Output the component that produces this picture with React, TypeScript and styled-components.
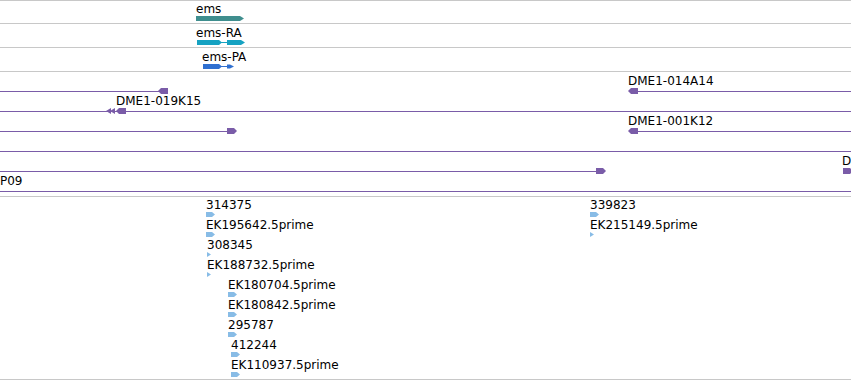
import React from "react";
import styled, { createGlobalStyle } from "styled-components";

const GlobalStyle = createGlobalStyle`
  html, body {
    margin: 0;
    padding: 0;
    background: #fff;
  }
  body {
    font-family: "DejaVu Sans", Verdana, sans-serif;
  }
`;

const PURPLE = "#7a5ca8";
const RULE = "#c8c8c8";

const View = styled.div`
  width: 851px;
  height: 380px;
  overflow: hidden;
  display: flex;
  flex-direction: column;
  border-top: 1px solid ${RULE};
  box-sizing: border-box;
`;

const GeneRow = styled.div<{ $h: number }>`
  position: relative;
  flex: none;
  height: ${(p) => p.$h}px;
  border-bottom: 1px solid ${RULE};
`;

const GeneFeature = styled.div<{ $top: number }>`
  position: absolute;
  top: ${(p) => p.$top}px;
  display: flex;
  flex-direction: column;
`;

const Label = styled.div`
  font-family: "DejaVu Sans", Verdana, sans-serif;
  font-size: 12px;
  line-height: 14px;
  color: #000;
  white-space: nowrap;
`;

const Glyph = styled.svg`
  display: block;
  overflow: visible;
`;

const Track = styled.div<{ $h: number }>`
  position: relative;
  flex: none;
  height: ${(p) => p.$h}px;
  border-bottom: 1px solid ${RULE};
`;

const Lane = styled.div`
  position: relative;
  height: 20px;
`;

const Spot = styled.div<{ $top: number }>`
  position: absolute;
  top: ${(p) => p.$top}px;
`;

const Stroke = styled.div`
  position: absolute;
  top: 19px;
  height: 1px;
  background: ${PURPLE};
`;

type Seg = [number, number];
type Mark = { x: number; kind: "l" | "r" | "dbl" };
type Bac = { segs: Seg[]; marks: Mark[]; labels: { x: number; text: string }[] };

const bacRows: Bac[] = [
  {
    segs: [[0, 160], [630, 851]],
    marks: [{ x: 158, kind: "l" }, { x: 628, kind: "l" }],
    labels: [{ x: 628, text: "DME1-014A14" }],
  },
  {
    segs: [[0, 851]],
    marks: [{ x: 106, kind: "dbl" }, { x: 116, kind: "l" }],
    labels: [{ x: 116, text: "DME1-019K15" }],
  },
  {
    segs: [[0, 230], [630, 851]],
    marks: [{ x: 227, kind: "r" }, { x: 628, kind: "l" }],
    labels: [{ x: 628, text: "DME1-001K12" }],
  },
  { segs: [[0, 851]], marks: [], labels: [] },
  {
    segs: [[0, 600]],
    marks: [{ x: 596, kind: "r" }, { x: 843, kind: "r" }],
    labels: [{ x: 842, text: "D" }],
  },
  { segs: [[0, 851]], marks: [], labels: [{ x: 0, text: "P09" }] },
];

type Est = { x: number; text: string; small?: boolean };
const estRows: Est[][] = [
  [{ x: 206, text: "314375" }, { x: 590, text: "339823" }],
  [{ x: 206, text: "EK195642.5prime" }, { x: 590, text: "EK215149.5prime", small: true }],
  [{ x: 207, text: "308345", small: true }],
  [{ x: 207, text: "EK188732.5prime", small: true }],
  [{ x: 228, text: "EK180704.5prime" }],
  [{ x: 228, text: "EK180842.5prime" }],
  [{ x: 228, text: "295787" }],
  [{ x: 231, text: "412244" }],
  [{ x: 231, text: "EK110937.5prime" }],
];

function BacMark({ kind }: { kind: Mark["kind"] }) {
  if (kind === "dbl") {
    return (
      <Glyph width={10} height={6}>
        <polygon points="0,3 5,0 5,6" fill={PURPLE} />
        <polygon points="4,3 9,0 9,6" fill={PURPLE} />
      </Glyph>
    );
  }
  const pts = kind === "r" ? "0,0 7,0 10,3 7,6 0,6" : "3,0 10,0 10,6 3,6 0,3";
  return (
    <Glyph width={10} height={6}>
      <polygon points={pts} fill={PURPLE} />
    </Glyph>
  );
}

function EstMark({ small }: { small?: boolean }) {
  return small ? (
    <Glyph width={4} height={5}>
      <polygon points="0,0 4,2.5 0,5" fill="#88bce6" />
    </Glyph>
  ) : (
    <Glyph width={9} height={5}>
      <polygon points="0,0 6,0 9,2.5 6,5 0,5" fill="#88bce6" />
    </Glyph>
  );
}

export default function App() {
  return (
    <>
      <GlobalStyle />
      <View>
        <GeneRow $h={22}>
          <GeneFeature $top={1} style={{ left: 196 }}>
            <Label>ems</Label>
            <Glyph width={48} height={5}>
              <polygon points="0,0 44,0 48,2.5 44,5 0,5" fill="#3f8e8e" />
            </Glyph>
          </GeneFeature>
        </GeneRow>
        <GeneRow $h={23}>
          <GeneFeature $top={2} style={{ left: 196 }}>
            <Label>ems-RA</Label>
            <Glyph width={49} height={5}>
              <polygon points="1,0 23,0 26,2.5 23,5 1,5" fill="#16a2c2" />
              <rect x={25} y={2} width={7} height={1} fill="#16a2c2" />
              <polygon points="31,0 45,0 49,2.5 45,5 31,5" fill="#16a2c2" />
            </Glyph>
          </GeneFeature>
        </GeneRow>
        <GeneRow $h={23}>
          <GeneFeature $top={2} style={{ left: 202 }}>
            <Label>ems-PA</Label>
            <Glyph width={33} height={5}>
              <polygon points="1,0 17,0 20,2.5 17,5 1,5" fill="#3070d0" />
              <rect x={19} y={2} width={7} height={1} fill="#3070d0" />
              <polygon points="25,0.5 28,0.5 32,2.5 28,4.5 25,4.5" fill="#3070d0" />
            </Glyph>
          </GeneFeature>
        </GeneRow>

        <Track $h={124}>
          {bacRows.map((row, i) => (
            <Lane key={i}>
              {row.segs.map(([a, b], j) => (
                <Stroke key={j} style={{ left: a, width: b - a }} />
              ))}
              {row.marks.map((m, j) => (
                <Spot key={j} $top={16} style={{ left: m.x }}>
                  <BacMark kind={m.kind} />
                </Spot>
              ))}
              {row.labels.map((l, j) => (
                <Spot key={j} $top={2} style={{ left: l.x }}>
                  <Label>{l.text}</Label>
                </Spot>
              ))}
            </Lane>
          ))}
        </Track>

        <Track $h={182}>
          {estRows.map((row, i) => (
            <Lane key={i}>
              {row.map((e, j) => (
                <Spot key={j} $top={1} style={{ left: e.x }}>
                  <Label>{e.text}</Label>
                  <EstMark small={e.small} />
                </Spot>
              ))}
            </Lane>
          ))}
        </Track>
      </View>
    </>
  );
}
